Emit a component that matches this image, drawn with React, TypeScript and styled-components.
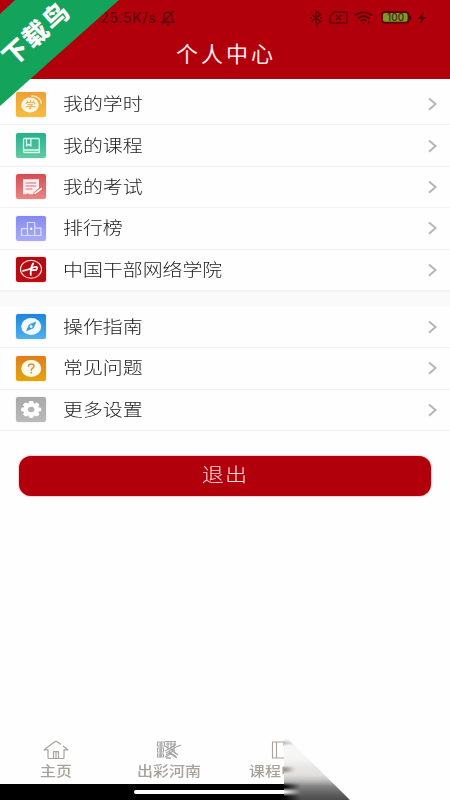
import React from 'react';
import styled, { createGlobalStyle } from 'styled-components';

const Global = createGlobalStyle`
  * { box-sizing: border-box; }
  body { margin: 0; background: #fefefe; font-family: "Noto Sans CJK SC", sans-serif; }
`;
const Screen = styled.div`
  position: relative; width: 450px; height: 800px; overflow: hidden;
  display: flex; flex-direction: column; background: #fefefe;
`;
const Header = styled.header`
  height: 79px; flex: none; background: #b1000c; display: flex; flex-direction: column;
`;
const StatusBar = styled.div`
  height: 34px; display: flex; justify-content: space-between; align-items: center;
  padding: 1px 24px 0 100px; color: #5e060b;
`;
const StatusGroup = styled.div<{ $gap: number }>`
  display: flex; align-items: center; gap: ${p => p.$gap}px;
`;
const Speed = styled.span`
  font: 500 14px/20px Inter, sans-serif; letter-spacing: 0.6px; white-space: nowrap;
`;
const Title = styled.h1`
  margin: 0; padding-left: 2px; text-align: center; color: #ffe9ea;
  font-size: 22px; font-weight: 400; line-height: 36px; letter-spacing: 3px;
`;
const List = styled.ul<{ $first?: boolean }>`
  list-style: none; margin: 0; padding: ${p => (p.$first ? '5px' : '0')} 0 0; flex: none;
`;
const Row = styled.li`
  height: 41.4px; display: flex; align-items: center; padding: 0 13px 0 16px;
  border-bottom: 1px solid #f1f1f1;
`;
const Tile = styled.span<{ $from: string; $to: string }>`
  width: 30px; height: 25px; flex: none; border-radius: 2px;
  background: linear-gradient(${p => p.$from}, ${p => p.$to});
  box-shadow: 0 0 2px ${p => p.$to}66;
  svg { display: block; }
`;
const Label = styled.span`
  flex: 1; margin: 0 0 2px 16.5px; font-size: 17px; font-weight: 300; line-height: 24px; color: #1c1c1c;
  transform: scaleX(1.171); transform-origin: left; white-space: nowrap;
`;
const Band = styled.div`
  height: 15.8px; flex: none; background: #fafafa; border-top: 1px solid #f3f3f3;
`;
const Logout = styled.button`
  flex: none; width: 412.5px; height: 40.5px; margin: 24.7px 0 0 18.5px; padding: 0 0 5px;
  border: 0; border-radius: 12px; background: #b1000c; color: #ffdcdc;
  font: 300 19px/35px "Noto Sans CJK SC", sans-serif;
  box-shadow: 0 0 2px #cf6269;
  span { display: inline-block; transform: scaleX(1.16); letter-spacing: 1px; }
`;
const Footer = styled.footer`
  width: 284px; margin-top: auto; overflow: hidden; flex: none;
`;
const Tabs = styled.nav`
  display: grid; grid-template-columns: repeat(3, 112.5px); height: 44px;
`;
const Tab = styled.div`
  display: flex; flex-direction: column; align-items: center; color: #a8a29a;
  svg { display: block; height: 20px; }
  span { font-size: 14px; line-height: 20px; font-weight: 500; white-space: nowrap; transform: scaleX(1.14); }
`;
const HomeBar = styled.div`
  height: 16.5px; background: #000; padding: 6.5px 0 0 134px;
  &::after { content: ''; display: block; height: 4px; background: #fff; border-radius: 2px 0 0 2px; }
`;
const Smear = styled.div`
  position: absolute; left: 284px; top: 739px; width: 66px; height: 61px;
  clip-path: polygon(0 0, 4px 0, 100% 100%, 0 100%);
  &::before {
    content: ''; display: block; height: 64px; margin-left: -3px; filter: blur(1px);
    background:
      linear-gradient(90deg, #000 3px, #0000 20px) 0 45px / 22px 5px no-repeat,
      linear-gradient(90deg, #fff 3px, #fff0 20px) 0 51px / 22px 4px no-repeat,
      linear-gradient(90deg, #000 3px, #0000 20px) 0 56px / 22px 8px no-repeat,
      linear-gradient(90deg, #8e8880 3px, #8e888000 14px) 0 28px / 15px 5px no-repeat,
      linear-gradient(90deg, #999 3px, #9990 14px) 0 3px / 15px 2px no-repeat,
      linear-gradient(#f0f0f0 0, #f7f7f7 10px, #f5f5f4 20px, #e6e4e1 30px, #e2e1df 36px, #bcbcbc 42px, #858585 47px, #666 53px, #4b4b4b 61px);
  }
`;
const Ribbon = styled.div`
  position: absolute; left: 0; top: 0; width: 120px; height: 107px;
  &::before {
    content: ''; display: block; height: 100%; background: #14a35b;
    clip-path: polygon(15px 0, 119px 0, 0 106px, 0 14px);
  }
`;
const RibbonText = styled.span`
  position: absolute; left: -13px; top: 17px; width: 96px; text-align: center;
  color: #fff; font-size: 25px; line-height: 30px; font-weight: 900; letter-spacing: 2px;
  transform: rotate(-42deg); white-space: nowrap;
`;

const Icon = ({ children }: { children: React.ReactNode }) => (
  <svg width="30" height="25" viewBox="0 0 30 25" fill="none" stroke="#fff" strokeLinecap="round" strokeLinejoin="round">{children}</svg>
);
const gearTeeth = [0, 45, 90, 135, 180, 225, 270, 315];
const icons: Record<string, React.ReactNode> = {
  hours: <Icon>
    <ellipse cx="14" cy="13" rx="8.8" ry="7.6" fill="#fff8e6" stroke="none" />
    <path d="M16 4.1c5 0 9 3.1 9.3 7.2" stroke="#ffe5b0" strokeWidth="1.5" />
    <path d="M11.2 8.9l.6 1M14.3 8.5l.3 1.2M17.7 8.9l-.8 1.1M10.3 12v-1.4h8.4V12M12 12.7h4.6l-2 1.5v2.7l-1.3-.3M10 14.7h8.9" stroke="#e9a23b" strokeWidth=".9" />
  </Icon>,
  course: <Icon>
    <path d="M8.5 5.5h13.8q1 0 1 1v13H9q-1.5 0-1.5-1.3V6.5q0-1 1-1zM8 17h15.2M10.5 6v7l2.1-1.8 2.3 1.8V6" stroke="#d9fff0" strokeWidth="1.3" />
  </Icon>,
  exam: <Icon>
    <path d="M7 5.2h16v9l-5.7 6H13l-1.5-1.3-1.2 1.3H7z" fill="#fff0f0" stroke="none" />
    <path d="M10 9h9.8M10 12h9.8M10 15h6" stroke="#d9676b" strokeWidth="1.1" />
    <path d="M19 19.5l6.2-4.8" stroke="#d9666b" strokeWidth="3.4" /><path d="M19 19.5l6.2-4.8" stroke="#fff0f0" strokeWidth="1.8" />
  </Icon>,
  rank: <Icon>
    <path d="M5.5 12.7h6v6.8h-6zM11.5 6.5h7.2v13h-7.2zM18.7 12.2h6.2v7.3h-6.2z" stroke="#dddfff" strokeWidth="1.2" />
    <circle cx="15.2" cy="12.7" r="1.2" fill="#fff" stroke="none" />
  </Icon>,
  academy: <Icon>
    <ellipse cx="15" cy="12.3" rx="10.5" ry="9" stroke="#ffe7e5" strokeWidth="1.1" />
    <path d="M7 13.8c4.3-.6 8.2-2.2 11.6-3.8 2.8-.7 3.6 1.4 1.2 3.2h-4M17.3 6.4c-2.2 3-2.9 7-2.5 11.4" stroke="#fff" strokeWidth="1.8" />
  </Icon>,
  guide: <Icon>
    <ellipse cx="15.2" cy="12.5" rx="10" ry="8.5" fill="#f0fbff" stroke="none" />
    <path d="M19.8 8.2L17.3 14l-6.7 2.8L13 11z" fill="#3a96d5" stroke="#3a96d5" strokeWidth=".6" /><circle cx="15.1" cy="12.5" r="1.5" fill="#dff5ff" stroke="none" />
  </Icon>,
  faq: <Icon>
    <ellipse cx="15.2" cy="12.5" rx="10" ry="8.5" fill="#fffbea" stroke="none" />
    <path d="M12.5 10.2c0-3.1 5.5-3.1 5.5 0 0 2-2.7 2-2.7 4" stroke="#d99140" strokeWidth="1.5" /><circle cx="15.3" cy="16.7" r=".9" fill="#d99140" stroke="none" />
  </Icon>,
  settings: <Icon>
    <g transform="translate(15.2 12.5) scale(1.19 1)" fill="#fff" stroke="none">
      {gearTeeth.map(a => <rect key={a} x="-2.1" y="-8.4" width="4.2" height="5" rx="1.4" transform={`rotate(${a})`} />)}
      <circle r="6.6" /><circle r="2.7" fill="#b3b3b3" />
    </g>
  </Icon>,
};
type Item = { id: string; text: string; from: string; to: string };
const main: Item[] = [
  { id: 'hours', text: '我的学时', from: '#ef9f37', to: '#f5bd3e' },
  { id: 'course', text: '我的课程', from: '#27b08d', to: '#62caa0' },
  { id: 'exam', text: '我的考试', from: '#d34d55', to: '#e78782' },
  { id: 'rank', text: '排行榜', from: '#8589ef', to: '#a9adf6' },
  { id: 'academy', text: '中国干部网络学院', from: '#b10c12', to: '#bd0b13' },
];
const more: Item[] = [
  { id: 'guide', text: '操作指南', from: '#1d85dc', to: '#50b1eb' },
  { id: 'faq', text: '常见问题', from: '#e07e1e', to: '#e4a50b' },
  { id: 'settings', text: '更多设置', from: '#a9a9a9', to: '#bababa' },
];
const MenuRow = ({ item }: { item: Item }) => (
  <Row>
    <Tile $from={item.from} $to={item.to}>{icons[item.id]}</Tile>
    <Label>{item.text}</Label>
    <svg width="9" height="14" viewBox="0 0 9 14" fill="none" stroke="#b5b5b5" strokeWidth="2"><path d="M1 1.4l6.6 5.6L1 12.7" /></svg>
  </Row>
);

export default function App() {
  return (
    <>
      <Global />
      <Screen>
        <Header>
          <StatusBar>
            <StatusGroup $gap={4}>
              <Speed>25.5K/s</Speed>
              <svg width="16" height="16" viewBox="0 0 16 16" fill="none" stroke="currentColor" strokeWidth="1.4">
                <path d="M2 12h12l-2-2.5V6c0-5-8-5-8 0v3.5zM6.5 14.5h3M2 14L13.5 1" />
              </svg>
            </StatusGroup>
            <StatusGroup $gap={6.4}>
              <svg width="12" height="16" viewBox="0 0 12 16" fill="none" stroke="currentColor" strokeWidth="1.5"><path d="M1.5 4.5l9 7L6 15V1l4.5 3.5-9 7M1 7v2M11 7v2" /></svg>
              <svg width="19" height="13" viewBox="0 0 19 13" fill="none" stroke="currentColor" strokeWidth="1.5"><path d="M5 1h12q1 0 1 1v9q0 1-1 1H2q-1 0-1-1V5zM7 4l5 5M12 4L7 9" /></svg>
              <svg width="20" height="14" viewBox="0 0 20 14" fill="none" stroke="currentColor" strokeWidth="1.8"><path d="M.7 4.5q8.8-6.5 17.6 0M3.6 7.4q5.9-4.3 11.8 0M6.4 10.1q3.1-2.2 6.2 0" /><circle cx="9.5" cy="12.2" r="1" fill="currentColor" stroke="none" /><path d="M15 10v3M18 10v3" strokeWidth="1" /></svg>
              <svg width="31" height="13" viewBox="0 0 31 13"><rect x="1" y="1.2" width="26.5" height="10.5" rx="3" fill="#83952c" stroke="#4e0808" strokeWidth="1.8" /><path d="M29.3 4.5v4" stroke="#4e0808" strokeWidth="1.8" /><text x="14.6" y="10" textAnchor="middle" fontFamily="Inter, sans-serif" fontSize="10" fontWeight="500" fill="#3e2c0b">100</text></svg>
              <svg width="8" height="12" viewBox="0 0 8 12" fill="currentColor"><path d="M5.5 0L0 7h3l-1 5 6-7H4.7z" /></svg>
            </StatusGroup>
          </StatusBar>
          <Title>个人中心</Title>
        </Header>
        <List $first>{main.map(i => <MenuRow key={i.id} item={i} />)}</List>
        <Band />
        <List>{more.map(i => <MenuRow key={i.id} item={i} />)}</List>
        <Logout><span>退出</span></Logout>
        <Footer>
          <Tabs>
            <Tab>
              <svg width="26" viewBox="0 0 26 20" fill="none" stroke="currentColor" strokeWidth="1.2" strokeLinejoin="round"><path d="M17.8 4.5l-3.6-2.7q-1.2-.8-2.4 0L1.2 9.8H5v7.7q0 1 1 1h14q1 0 1-1V9.8h3.8L20 6M10.5 18.5v-6.8h5v6.8M13 12v6" /></svg>
              <span>主页</span>
            </Tab>
            <Tab>
              <svg width="26" viewBox="0 0 26 20" fill="none" stroke="#a5a5a5" strokeWidth="1.1"><path d="M1.5 2h7v4h-7zM3 4h4M1.5 8h6v4h-6zM1.5 14h6v3h-6zM9 1.5h11M10 4h9M9 6l4 3 7-5M9 11l9-5M10 13l10-6 5-2M10 15l9-5M9 17l6-3 6 4M14 8l6 6M17 11l5 4M18 6v7M12 2v6M15 2v5M19 2v4M5 2v15" /><path d="M3 10h3M3 15.5h3M10 18h5M13 12l7 5" strokeWidth="1.7" /></svg>
              <span>出彩河南</span>
            </Tab>
            <Tab>
              <svg width="20" viewBox="0 0 20 20" fill="none" stroke="currentColor" strokeWidth="1.1"><path d="M1.5 2H18v16H1.5zM5.5 2v16M13 2v4" /></svg>
              <span>课程中心</span>
            </Tab>
          </Tabs>
          <HomeBar />
        </Footer>
        <Smear />
        <Ribbon><RibbonText>下载鸟</RibbonText></Ribbon>
      </Screen>
    </>
  );
}
